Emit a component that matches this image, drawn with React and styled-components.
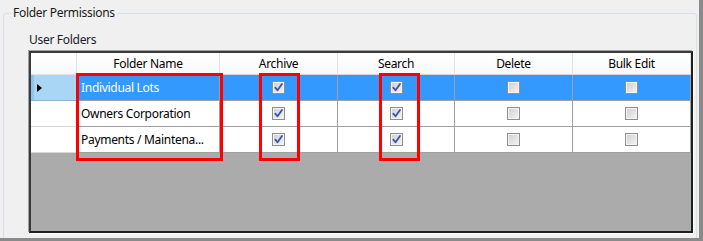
import React from "react";
import styled, { createGlobalStyle } from "styled-components";

const columns = [
  { key: "name", title: "Folder Name", width: 143 },
  { key: "archive", title: "Archive", width: 118 },
  { key: "search", title: "Search", width: 117 },
  { key: "del", title: "Delete", width: 118 },
  { key: "bulk", title: "Bulk Edit", width: 118 },
];

const rows = [
  { name: "Individual Lots", archive: true, search: true, del: false, bulk: false },
  { name: "Owners Corporation", archive: true, search: true, del: false, bulk: false },
  { name: "Payments / Maintena...", archive: true, search: true, del: false, bulk: false },
];

const template = `46px ${columns.map((c) => c.width + "px").join(" ")}`;

function App() {
  return (
    <>
      <GlobalStyle />
      <Screen>
        <GroupBox>
          <Legend>Folder Permissions</Legend>
          <SubLabel>User Folders</SubLabel>
          <GridFrame>
            <HeaderRow>
              <CornerCell />
              {columns.map((c) => (
                <HeaderCell key={c.key}>{c.title}</HeaderCell>
              ))}
            </HeaderRow>
            {rows.map((r, i) => (
              <Row key={r.name}>
                <RowHead $selected={i === 0}>{i === 0 && <Arrow />}</RowHead>
                <NameCell $selected={i === 0}>{r.name}</NameCell>
                {columns.slice(1).map((c) => (
                  <CheckCell key={c.key} $selected={i === 0}>
                    <CheckBox>
                      {r[c.key] && (
                        <svg width="11" height="11" viewBox="0 0 11 11">
                          <path
                            d="M2.3 5.6 L4.5 8.3 L9 2"
                            fill="none"
                            stroke="#3a55a8"
                            strokeWidth="1.8"
                            strokeLinecap="round"
                            strokeLinejoin="round"
                          />
                        </svg>
                      )}
                    </CheckBox>
                  </CheckCell>
                ))}
              </Row>
            ))}
            {/* red annotation boxes drawn over the grid */}
            <Marker $left={45} $width={147} />
            <Marker $left={228} $width={41} />
            <Marker $left={348} $width={41} />
          </GridFrame>
        </GroupBox>
      </Screen>
    </>
  );
}
export default App;

const GlobalStyle = createGlobalStyle`
  body {
    margin: 0;
    background: #f0f0f0;
    font-family: "Noto Sans", "Open Sans", sans-serif;
    font-size: 12px;
    letter-spacing: -0.3px;
    color: #000;
  }
`;

const Screen = styled.div`
  width: 703px;
  height: 241px;
  box-sizing: border-box;
  overflow: hidden;
  background: #f0f0f0;
  border-right: 4px solid #8a8a8a;
  border-bottom: 3px solid #8a8a8a;
`;

const GroupBox = styled.fieldset`
  margin: 5px 0 0 3px;
  padding: 0;
  width: 694px;
  height: 260px;
  box-sizing: border-box;
  border: 1px solid #d5dfe5;
  border-radius: 3px;
`;

const Legend = styled.legend`
  margin-left: 7px;
  padding: 0 2px;
  line-height: 16px;
  color: #1a1a1a;
`;

const SubLabel = styled.div`
  margin: 11px 0 3px 25px;
  line-height: 16px;
  color: #1b1b2b;
`;

const GridFrame = styled.div`
  position: relative;
  margin-left: 25px;
  width: 664px;
  height: 182px;
  box-sizing: border-box;
  border: 2px solid #1e1e1e;
  border-top-color: #3a3a3a;
  border-left-color: #3a3a3a;
  box-shadow: 1px 1px 0 #ffffff, -1px -1px 0 #a0a0a0;
  background: #ababab;
`;

const HeaderRow = styled.div`
  display: grid;
  grid-template-columns: ${template};
  height: 22px;
  background: linear-gradient(#ffffff, #f7f8fa);
`;

const CornerCell = styled.div`
  border-right: 1px solid #e3e3e3;
  border-bottom: 1px solid #e3e3e3;
`;

const HeaderCell = styled.div`
  display: flex;
  align-items: center;
  justify-content: center;
  border-right: 1px solid #e3e3e3;
  border-bottom: 1px solid #d5d5d5;
  color: #000;
`;

const Row = styled.div`
  display: grid;
  grid-template-columns: ${template};
  height: 26px;
`;

const RowHead = styled.div`
  display: flex;
  align-items: center;
  padding-left: 6px;
  box-sizing: border-box;
  background: ${(p) => (p.$selected ? "#a8d6f4" : "#ffffff")};
  box-shadow: ${(p) => (p.$selected ? "inset 3px 0 0 #8ec6ea" : "none")};
  border-right: 1px solid #d8d8d8;
  border-bottom: 1px solid ${(p) => (p.$selected ? "#86b6d4" : "#d8d8d8")};
`;

const Arrow = styled.div`
  width: 0;
  height: 0;
  border-top: 4px solid transparent;
  border-bottom: 4px solid transparent;
  border-left: 5px solid #000;
`;

const Cell = styled.div`
  display: flex;
  align-items: center;
  box-sizing: border-box;
  background: ${(p) => (p.$selected ? "#3399ff" : "#ffffff")};
  color: ${(p) => (p.$selected ? "#ffffff" : "#000000")};
  border-right: 1px solid #a0a0a0;
  border-bottom: 1px solid #a0a0a0;
`;

const NameCell = styled(Cell)`
  padding-left: 4px;
  white-space: nowrap;
  overflow: hidden;
`;

const CheckCell = styled(Cell)`
  justify-content: center;
`;

const CheckBox = styled.div`
  width: 13px;
  height: 13px;
  box-sizing: border-box;
  display: flex;
  align-items: center;
  justify-content: center;
  border: 1px solid #8e8f8f;
  background: linear-gradient(135deg, #cfcfcf, #f4f4f4);
  box-shadow: inset 0 0 0 1px #f2f2f2;
`;

const Marker = styled.div`
  position: absolute;
  top: 20px;
  left: ${(p) => p.$left}px;
  width: ${(p) => p.$width}px;
  height: 88px;
  box-sizing: border-box;
  border: 3px solid #ff0000;
  pointer-events: none;
`;
